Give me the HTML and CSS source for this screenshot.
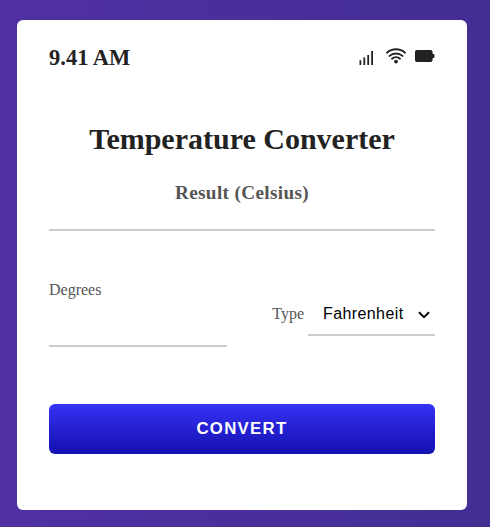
FILE: index.html
```html
<!DOCTYPE html>
<html lang="en">
<head>
<meta charset="utf-8">
<title>Temperature Converter</title>
<link rel="stylesheet" href="styles.css">
</head>
<body>
<main class="card">
  <header class="status">
    <h3 class="time">9.41 AM</h3>
    <div class="icons">
      <svg class="signal" width="15" height="14" viewBox="0 0 15 14" fill="#222"><path d="M.5 9.3h1.8V14H.5zM4.4 6.6h1.8V14H4.4zM8.3 4h1.8v10H8.3zM12.2 0H14v14h-1.8z"/></svg>
      <svg class="wifi" width="20" height="16" viewBox="0 0 20 16" fill="none" stroke="#222" stroke-width="1.9" stroke-linecap="round"><path d="M1 4.7a13.6 13.6 0 0 1 18 0M3.5 7.9a10 10 0 0 1 13 0M6.1 10.8a5.8 5.8 0 0 1 7.8 0"/><circle cx="10" cy="13.6" r="1.9" fill="#222" stroke="none"/></svg>
      <svg class="battery" width="20" height="12" viewBox="0 0 20 12" fill="#222"><rect width="17.6" height="12" rx="2"/><path d="M17 4h1.6q.8 0 .8.8v2.4q0 .8-.8.8H17z"/></svg>
    </div>
  </header>
  <h1 class="title">Temperature Converter</h1>
  <h2 class="result-label">Result (Celsius)</h2>
  <div class="result"></div>
  <form class="form">
    <div class="fields">
      <div class="degrees">
        <label for="degrees">Degrees</label>
        <input id="degrees" type="text">
      </div>
      <div class="type">
        <label for="type">Type</label>
        <div class="select-wrap">
          <select id="type"><option>Fahrenheit</option><option>Celsius</option></select>
          <svg class="chevron" width="12" height="8" viewBox="0 0 12 8" fill="none" stroke="#000" stroke-width="2"><path d="M1 1.2l5 5 5-5"/></svg>
        </div>
      </div>
    </div>
    <button class="convert" type="button">CONVERT</button>
  </form>
</main>
</body>
</html>
```
FILE: styles.css
```css
* {
  box-sizing: border-box;
  margin: 0;
  padding: 0;
}

body {
  height: 527px;
  padding: 20px 0 0 17px;
  overflow: hidden;
  background: linear-gradient(to right, #5030a2, #432e94);
  font-family: "Liberation Serif", serif;
}

.card {
  width: 450px;
  height: 490px;
  padding: 24px 32px;
  border-radius: 6px;
  background: #fff;
}

.status {
  display: flex;
  justify-content: space-between;
  height: 26px;
}

.time {
  font-size: 22.5px;
  line-height: 28px;
  color: #222;
}

.icons {
  display: flex;
  align-items: flex-start;
}

.signal {
  margin: 7px 12px 0 0;
}

.wifi {
  margin: 4px 9px 0 0;
}

.battery {
  margin-top: 6px;
}

.title {
  margin-top: 50px;
  font-size: 30px;
  line-height: 38px;
  text-align: center;
  color: #222;
}

.result-label {
  margin-top: 23px;
  font-size: 19.2px;
  line-height: 24px;
  text-align: center;
  letter-spacing: 0.35px;
  color: #555;
}

.result {
  height: 26px;
  border-bottom: 2px solid #ccc;
}

.form {
  margin-top: 49px;
}

.fields {
  display: flex;
  justify-content: space-between;
}

label {
  font-size: 16px;
  line-height: 20px;
  color: #555;
}

.degrees {
  display: flex;
  flex-direction: column;
  width: 178px;
}

.degrees input {
  height: 47px;
  border: 0;
  border-bottom: 2px solid #ccc;
  outline: none;
}

.type {
  display: flex;
  align-items: center;
  gap: 4px;
  height: 68px;
}

.select-wrap {
  display: flex;
  position: relative;
  width: 127px;
  height: 44px;
  border-bottom: 2px solid #ccc;
}

select {
  width: 100%;
  padding-left: 15px;
  border: 0;
  appearance: none;
  background: transparent;
  font: 16px "Liberation Sans", sans-serif;
  letter-spacing: 0.4px;
  color: #000;
}

.chevron {
  position: absolute;
  top: 19px;
  right: 5px;
  pointer-events: none;
}

.convert {
  display: block;
  width: 100%;
  height: 50px;
  margin-top: 56px;
  border: 0;
  border-radius: 6px;
  background: linear-gradient(#3632f4, #130faf);
  font: bold 16.8px "Liberation Sans", sans-serif;
  letter-spacing: 1.3px;
  color: #fff;
}
```
